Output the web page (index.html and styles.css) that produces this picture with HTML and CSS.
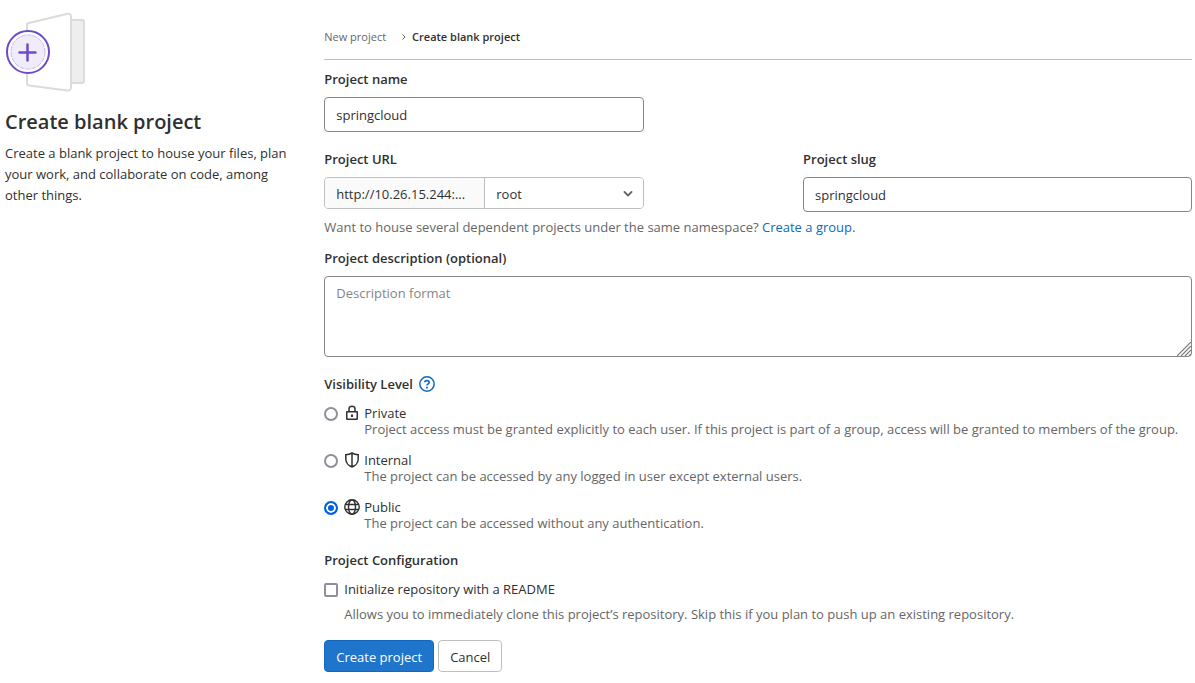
FILE: index.html
```html
<!DOCTYPE html>
<html lang="en">
<head>
    <meta charset="UTF-8">
    <meta name="viewport" content="width=device-width, initial-scale=1.0">
    <title>Create blank project</title>
    <link rel="stylesheet" href="styles.css">
</head>
<body>
    <div class="page">
        <aside class="intro">
            <svg class="intro-image" width="82" height="82" viewBox="0 0 82 82" fill="none">
                <rect x="60" y="10" width="19" height="63" rx="2" fill="#eee" stroke="#dbdbdb" stroke-width="2"/>
                <path d="M24 13q-2 .3-2 2v58q0 2 2 2.400l38.500 5q3.500.3 3.500-2.900v-71q0-3-3.500-2.700z" fill="#fff" stroke="#dbdbdb" stroke-width="2"/>
                <circle cx="23" cy="42" r="21" fill="#fff" stroke="#6b4bc9" stroke-width="2"/>
                <circle cx="23" cy="42" r="17" fill="#f0ecfb" stroke="#c9bdee" stroke-width="1" stroke-dasharray="5 1"/>
                <path d="M22.500 34.500v16M14.500 42.500h16" stroke="#6b4bc9" stroke-width="2.500" stroke-linecap="round"/>
            </svg>
            <h1>Create blank project</h1>
            <p>Create a blank project to house your files, plan your work, and collaborate on code, among other things.</p>
        </aside>

        <main>
            <nav class="breadcrumb">
                <a href="#">New project</a>
                <svg width="4" height="6" viewBox="0 0 4 6" fill="none" stroke="#666"><path d="M.5.500 3 3 .5 5.500"/></svg>
                <a href="#" class="current">Create blank project</a>
            </nav>

            <form>
                <div class="form-group">
                    <label class="label" for="name">Project name</label>
                    <input class="input input-md" type="text" id="name" value="springcloud">
                </div>

                <div class="form-row">
                    <div>
                        <label class="label" for="namespace">Project URL</label>
                        <div class="input-group">
                            <span class="input-prefix">http://10.26.15.244:...</span>
                            <div class="select-wrap">
                                <select id="namespace">
                                    <option>root</option>
                                </select>
                                <svg class="chevron" width="10" height="6" viewBox="0 0 10 6" fill="none" stroke="#666" stroke-width="1.800" stroke-linecap="round"><path d="m1.500 1 3.500 3.500L8.500 1"/></svg>
                            </div>
                        </div>
                    </div>
                    <div>
                        <label class="label" for="slug">Project slug</label>
                        <input class="input" type="text" id="slug" value="springcloud">
                    </div>
                </div>
                <p class="group-hint">Want to house several dependent projects under the same namespace? <a href="#">Create a group.</a></p>

                <div class="form-group">
                    <label class="label" for="description">Project description (optional)</label>
                    <div class="textarea-wrap">
                        <textarea class="input" id="description" placeholder="Description format"></textarea>
                        <svg class="grip" width="14" height="14" viewBox="0 0 14 14" stroke="#777" stroke-width="1.200"><path d="M0 14 14 0M4 14 14 4M8 14l6-6M12 14l2-2"/></svg>
                    </div>
                </div>

                <fieldset class="visibility">
                    <legend class="label">
                        Visibility Level
                        <a href="#" aria-label="Help">
                            <svg width="16" height="16" viewBox="0 0 16 16" fill="none" stroke="#1068bf"><circle cx="8" cy="8" r="7.200" stroke-width="1.500"/><path d="M5.800 6.300C5.800 4 10.200 4 10.200 6.500 10.200 8 8 7.800 8 9.600" stroke-width="1.600"/><path d="M8 10.800v1.600" stroke-width="1.800"/></svg>
                        </a>
                    </legend>
                    <div class="option">
                        <input type="radio" name="visibility" id="private">
                        <svg width="16" height="16" viewBox="0 0 16 16" fill="none" stroke="#303030" stroke-width="1.500"><rect x="2.750" y="6.750" width="10.500" height="7.500" rx=".5"/><path d="M5 6.500V4.200a3 3 0 0 1 6 0v2.300"/><path d="M8 9.500v2.500" stroke-width="2"/></svg>
                        <label for="private">Private</label>
                        <p>Project access must be granted explicitly to each user. If this project is part of a group, access will be granted to members of the group.</p>
                    </div>
                    <div class="option">
                        <input type="radio" name="visibility" id="internal">
                        <svg width="16" height="16" viewBox="0 0 16 16" fill="none" stroke="#303030" stroke-width="1.500"><path d="M8 1v14M8 1C6 2.200 4 2.700 1.800 2.800V7C1.800 11 5 14 8 15c3-1 6.200-4 6.200-8V2.800C12 2.700 10 2.200 8 1z"/></svg>
                        <label for="internal">Internal</label>
                        <p>The project can be accessed by any logged in user except external users.</p>
                    </div>
                    <div class="option">
                        <input type="radio" name="visibility" id="public" checked>
                        <svg width="16" height="16" viewBox="0 0 16 16" fill="none" stroke="#303030" stroke-width="1.400"><circle cx="8" cy="8" r="7.200"/><ellipse cx="8" cy="8" rx="3.500" ry="7.200"/><path d="M1 5.500h14M1 10.500h14"/></svg>
                        <label for="public">Public</label>
                        <p>The project can be accessed without any authentication.</p>
                    </div>
                </fieldset>

                <fieldset class="configuration">
                    <legend class="label">Project Configuration</legend>
                    <div class="check">
                        <input type="checkbox" id="readme">
                        <label for="readme">Initialize repository with a README</label>
                        <p>Allows you to immediately clone this project’s repository. Skip this if you plan to push up an existing repository.</p>
                    </div>
                </fieldset>

                <div class="actions">
                    <button type="submit" class="btn btn-confirm">Create project</button>
                    <button type="button" class="btn">Cancel</button>
                </div>
            </form>
        </main>
    </div>
</body>
</html>
```
FILE: styles.css
```css
* {
    box-sizing: border-box;
}
body {
    margin: 0;
    background-color: #fff;
    color: #303030;
    font-family: "Open Sans", "Noto Sans", sans-serif;
    font-size: 13px;
    line-height: 20px;
}
p,
h1,
fieldset {
    margin: 0;
    padding: 0;
    border: none;
    min-width: 0;
}
a {
    color: #1068bf;
    text-decoration: none;
}
input,
select,
textarea,
button {
    margin: 0;
    font: inherit;
    color: inherit;
}
svg {
    display: block;
}
.page {
    display: grid;
    grid-template-columns: 1fr 3fr;
    gap: 30px;
    padding: 0 3px 11px 5px;
}

/* Left column */
.intro {
    padding-top: 10px;
}
.intro h1 {
    margin: 17px 0 9px;
    font-size: 20px;
    line-height: 25px;
    font-weight: 600;
}
.intro p {
    line-height: 21px;
}

/* Breadcrumb */
.breadcrumb {
    display: flex;
    align-items: center;
    height: 60px;
    padding-top: 14px;
    border-bottom: 1px solid #bfbfbf;
    font-size: 11px;
}
.breadcrumb a {
    color: #666;
}
.breadcrumb svg {
    margin: 0 6px 0 16px;
}
.breadcrumb .current {
    color: #303030;
    font-weight: 600;
}

/* Form */
form {
    padding-top: 9px;
}
.label {
    display: block;
    margin-bottom: 8px;
    padding: 0;
    font-weight: 600;
}
.form-group {
    margin-bottom: 17px;
}
.input {
    display: block;
    width: 100%;
    height: 35px;
    padding: 0 11px;
    border: 1px solid #868686;
    border-radius: 4px;
    background-color: #fff;
}
.input-md {
    max-width: 320px;
}
.form-row {
    display: grid;
    grid-template-columns: 15fr 13fr;
    gap: 30px;
}
.input-group {
    display: grid;
    grid-template-columns: 1fr 1fr;
    max-width: 320px;
    height: 32px;
    border: 1px solid #bfbfbf;
    border-radius: 4px;
    overflow: hidden;
}
.input-prefix {
    padding: 0 11px;
    background-color: #fafafa;
    line-height: 32px;
    white-space: nowrap;
}
.select-wrap {
    position: relative;
    border-left: 1px solid #bfbfbf;
}
.select-wrap select {
    width: 100%;
    height: 100%;
    padding: 0 11px;
    border: none;
    background-color: #fff;
    appearance: none;
}
.chevron {
    position: absolute;
    top: 13px;
    right: 10px;
    pointer-events: none;
}
.group-hint {
    margin: 5px 0 11px;
    color: #666;
}
.textarea-wrap {
    position: relative;
}
.textarea-wrap textarea {
    height: 81px;
    padding: 6px 11px;
    resize: none;
}
.textarea-wrap textarea::placeholder {
    color: #868686;
}
.grip {
    position: absolute;
    right: 1px;
    bottom: 1px;
}

/* Radios and checkbox */
.visibility .label {
    display: flex;
    align-items: center;
    gap: 6px;
    margin-bottom: 11px;
}
.option {
    display: grid;
    grid-template-columns: 20px 20px 1fr;
    align-items: center;
    margin-bottom: 15px;
    line-height: 16px;
}
.option input,
.check input {
    width: 14px;
    height: 14px;
    margin-top: 2px;
    border: 2px solid #8f8f9d;
    background-color: #fff;
    appearance: none;
}
.option input {
    border-radius: 50%;
}
.check input {
    border-radius: 2px;
}
.option input:checked {
    border-color: #0061e0;
    background-color: #0061e0;
    box-shadow: inset 0 0 0 2px #fff;
}
.option p {
    grid-column: 3;
    color: #666;
}
.configuration {
    margin-top: 4px;
}
.configuration .label {
    margin-bottom: 9px;
}
.check {
    display: grid;
    grid-template-columns: 20px 1fr;
    row-gap: 5px;
    align-items: center;
}
.check p {
    grid-column: 2;
    color: #666;
}

/* Buttons */
.actions {
    display: flex;
    gap: 4px;
    margin-top: 16px;
}
.btn {
    height: 32px;
    padding: 1px 11px 0;
    border: 1px solid #bfbfbf;
    border-radius: 4px;
    background-color: #fff;
    cursor: pointer;
}
.btn-confirm {
    border-color: #1068bf;
    background-color: #1f75cb;
    color: #fff;
}
```
